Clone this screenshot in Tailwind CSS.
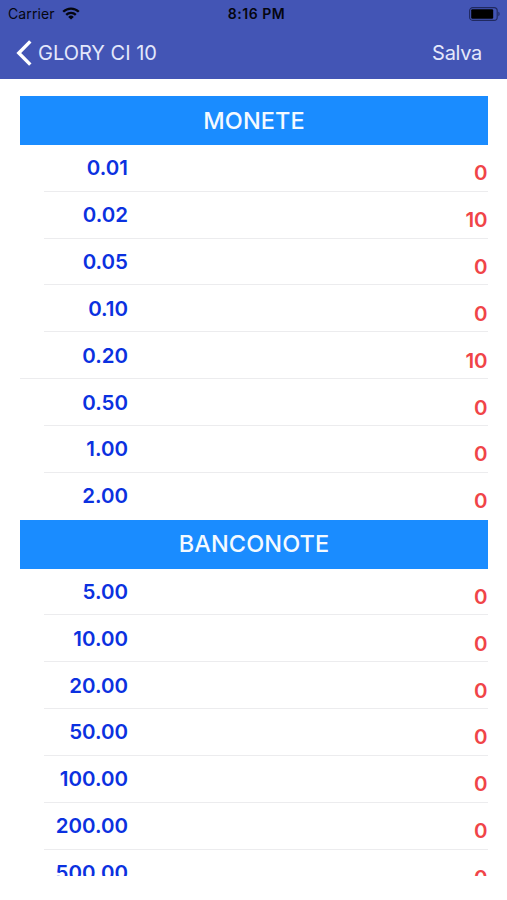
<!DOCTYPE html>
<html lang="it">
  <head>
    <meta charset="UTF-8" />
    <meta name="viewport" content="width=device-width, initial-scale=1.0" />
    <title>GLORY CI 10</title>
    <script src="https://cdn.jsdelivr.net/npm/@tailwindcss/browser@4"></script>
  </head>
  <body class="h-screen overflow-hidden bg-white font-['Inter',sans-serif]">
    <header class="h-[79px] bg-[#4355b5]">
      <!-- Status bar -->
      <div class="grid h-[27px] grid-cols-3 items-center pl-2 pr-[7px] text-[#05060f]">
        <div class="flex items-center gap-[7px]">
          <span class="text-[14px] tracking-[0.1px]">Carrier</span>
          <svg class="h-[13px] w-[18px]" viewBox="0 0 18 13" fill="none" stroke="currentColor" stroke-width="2.3">
            <path d="M1.2 4.8a11 11 0 0 1 15.6 0" />
            <path d="M4.2 7.9a6.8 6.8 0 0 1 9.6 0" />
            <path d="M9 12.6 6.2 9.9a4 4 0 0 1 5.6 0z" fill="currentColor" stroke="none" />
          </svg>
        </div>
        <span class="pl-[5px] text-center text-[14px] font-semibold tracking-[0.5px]">8:16 PM</span>
        <svg class="h-[14px] w-[31px] justify-self-end" viewBox="0 0 31 14">
          <rect x="0.6" y="0.6" width="27.6" height="12.8" rx="3.2" fill="none" stroke="#20295f" stroke-width="1.1" />
          <rect x="2.2" y="2.2" width="22" height="9.6" rx="1.2" fill="#000" />
          <path d="M29.4 4.8c1.6.6 1.6 3.8 0 4.4z" fill="#20295f" />
        </svg>
      </div>
      <!-- Navigation -->
      <nav class="flex h-[52px] items-center justify-between pl-4 pr-[25px] text-[20px] text-[#e4e8fb]">
        <a class="flex items-center gap-[6px]">
          <svg class="h-[26px] w-4" viewBox="0 0 16 26" fill="none" stroke="#fff" stroke-width="3.4">
            <path d="M14.3 1.4 2.8 13l11.5 11.6" />
          </svg>
          <span>GLORY CI 10</span>
        </a>
        <a class="tracking-[-0.3px]">Salva</a>
      </nav>
    </header>

    <main id="list" class="mt-[17px] ml-[20.4px] h-[780px] w-[467.2px] overflow-hidden"></main>

    <script>
      const sections = [
        {
          title: "MONETE",
          rows: [["0.01", 0], ["0.02", 10], ["0.05", 0], ["0.10", 0], ["0.20", 10], ["0.50", 0], ["1.00", 0], ["2.00", 0]],
        },
        {
          title: "BANCONOTE",
          rows: [["5.00", 0], ["10.00", 0], ["20.00", 0], ["50.00", 0], ["100.00", 0], ["200.00", 0], ["500.00", 0]],
        },
      ];

      // The row with full-width separator is the selected one
      const selected = "0.20";

      function separator(value, last) {
        if (last) return "";
        const inset = value === selected ? "" : "ml-6";
        return `<div class="h-px bg-[#ececee] ${inset}"></div>`;
      }

      function row([value, count], i, rows) {
        return `
          <div class="flex h-[46.85px] flex-col">
            <div class="flex flex-1 justify-between text-[20.5px] leading-[26px] font-semibold">
              <span class="w-[107.6px] pt-[10.4px] text-right text-[#0b31e0]">${value}</span>
              <span class="pt-[15.4px] text-right text-[#f04448]">${count}</span>
            </div>
            ${separator(value, i === rows.length - 1)}
          </div>`;
      }

      document.getElementById("list").innerHTML = sections
        .map(
          (s) => `
          <h2 class="flex h-[48.9px] items-center justify-center bg-[#1a8cff] text-[23.5px] font-medium tracking-[0.1px] text-[#f4faff]">${s.title}</h2>
          ${s.rows.map(row).join("")}`
        )
        .join("");
    </script>
  </body>
</html>
